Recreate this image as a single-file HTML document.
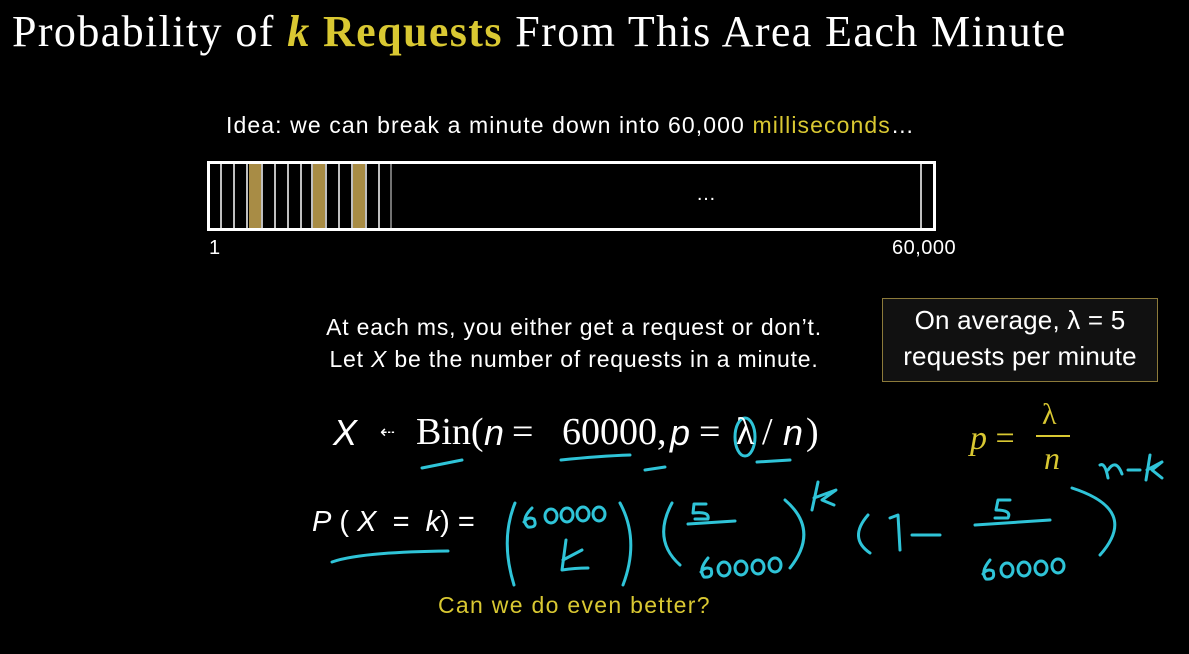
<!DOCTYPE html>
<html><head><meta charset="utf-8"><style>
body{margin:0;width:1189px;height:654px;background:#000;overflow:hidden;position:relative;font-family:"Liberation Sans","DejaVu Sans",sans-serif;color:#fff}
.a{position:absolute;white-space:nowrap}
.title{left:12px;top:6px;font-family:"Liberation Serif",serif;font-size:44px;letter-spacing:1.4px;color:#fff}
.y{color:#d9c832}
.m{position:absolute;font-family:"Liberation Serif",serif;font-size:38px;top:410px}
.mi{position:absolute;font-family:"Liberation Sans",sans-serif;font-style:italic;font-size:36px;top:412px}
</style></head><body>
<div class="a title">Probability of <b class="y"><i>k</i> Requests</b> From This Area Each Minute</div>
<div class="a" style="left:226px;top:112px;font-size:23px;letter-spacing:1.1px">Idea: we can break a minute down into 60,000 <span class="y">milliseconds</span>…</div>
<svg class="a" style="left:0;top:0" width="1189" height="654">
<rect x="208.5" y="162.5" width="726" height="67" fill="none" stroke="#fff" stroke-width="3"/>
<g fill="#a88c45"><rect x="249" y="164" width="12" height="64"/><rect x="313" y="164" width="12" height="64"/><rect x="353" y="164" width="12" height="64"/></g>
<g stroke="#fff" stroke-width="1.5">
<line x1="221" y1="164" x2="221" y2="228"/><line x1="234" y1="164" x2="234" y2="228"/><line x1="247" y1="164" x2="247" y2="228"/><line x1="262" y1="164" x2="262" y2="228"/><line x1="275" y1="164" x2="275" y2="228"/><line x1="288" y1="164" x2="288" y2="228"/><line x1="301" y1="164" x2="301" y2="228"/><line x1="312" y1="164" x2="312" y2="228"/><line x1="326" y1="164" x2="326" y2="228"/><line x1="339" y1="164" x2="339" y2="228"/><line x1="352" y1="164" x2="352" y2="228"/><line x1="366" y1="164" x2="366" y2="228"/><line x1="379" y1="164" x2="379" y2="228"/><line x1="391" y1="164" x2="391" y2="228" stroke="#999"/><line x1="921" y1="164" x2="921" y2="228"/>
</g>
<g fill="none" stroke="#2fc4d8" stroke-width="3" stroke-linecap="round" stroke-linejoin="round">
<path d="M422 468 L462 460"/><path d="M561 460 Q600 456 630 455"/><path d="M645 470 L665 467"/><path d="M757 462 L790 460"/>
<ellipse cx="745" cy="437" rx="10" ry="19"/>
<path d="M332 562 Q360 552 448 551"/>
<path d="M515 503 Q500 540 514 585"/><path d="M620 503 Q640 540 623 585"/>
<path d="M532 508 Q520 520 528 527 Q538 528 534 519 Q528 516 524 522"/>
<ellipse cx="551" cy="516" rx="6" ry="7"/><ellipse cx="567" cy="515" rx="6" ry="7"/><ellipse cx="583" cy="514" rx="6" ry="7"/><ellipse cx="599" cy="514" rx="6" ry="7"/>
<path d="M566 540 L562 570 Q575 568 588 568"/><path d="M563 560 L582 550"/>
<path d="M672 503 Q652 540 680 565"/><path d="M688 524 L735 521"/><path d="M706 504 L694 504 L693 513 Q710 511 708 519 L695 519"/>
<path d="M708 558 Q698 570 704 577 Q714 578 711 569 Q705 566 701 572"/>
<ellipse cx="724" cy="569" rx="6" ry="7"/><ellipse cx="741" cy="568" rx="6" ry="7"/><ellipse cx="758" cy="567" rx="6" ry="7"/><ellipse cx="775" cy="565" rx="6" ry="7"/>
<path d="M785 500 Q820 530 790 568"/>
<path d="M818 482 L812 510"/><path d="M814 498 L836 490 L822 500 L834 505"/>
<path d="M868 515 Q848 538 870 553"/><path d="M890 518 L898 515 L900 550"/><path d="M912 535 L940 535"/>
<path d="M975 525 L1050 520"/><path d="M1010 500 L998 500 L996 510 Q1012 510 1008 518 L995 518"/>
<path d="M990 560 Q980 572 986 579 Q996 580 993 571 Q987 568 983 574"/>
<ellipse cx="1007" cy="570" rx="6" ry="7"/><ellipse cx="1024" cy="569" rx="6" ry="7"/><ellipse cx="1041" cy="568" rx="6" ry="7"/><ellipse cx="1058" cy="566" rx="6" ry="7"/>
<path d="M1072 488 Q1140 510 1100 555"/>
<path d="M1100 465 Q1105 462 1108 478 M1108 470 Q1116 458 1122 474"/><path d="M1128 470 L1140 470"/><path d="M1150 455 L1146 480"/><path d="M1147 470 L1162 462 L1152 470 L1162 478"/>
</g>
</svg>
<div class="a" style="left:696px;top:183px;font-size:20px">…</div>
<div class="a" style="left:209px;top:237px;font-size:20px">1</div>
<div class="a" style="left:892px;top:237px;font-size:20px;letter-spacing:0.5px">60,000</div>
<div class="a" style="left:174px;width:800px;top:311px;font-size:23px;letter-spacing:0.8px;text-align:center;line-height:32px">At each ms, you either get a request or don’t.<br>Let <i>X</i> be the number of requests in a minute.</div>
<div class="a" style="left:882px;top:298px;width:276px;height:84px;border:1.5px solid #8c7a3a;background:#111;font-size:26px;letter-spacing:0.2px;text-align:center;line-height:36px;box-sizing:border-box;padding-top:3px">On average, λ = 5<br>requests per minute</div>
<div class="mi" style="left:333px">X</div>
<div class="a" style="left:380px;top:422px;font-size:18px">⇠</div>
<div class="m" style="left:416px">Bin(</div>
<div class="mi" style="left:484px">n</div>
<div class="m" style="left:512px">=</div>
<div class="m" style="left:562px">60000,</div>
<div class="mi" style="left:670px">p</div>
<div class="m" style="left:699px">=</div>
<div class="m" style="left:736px">λ</div>
<div class="m" style="left:762px">/</div>
<div class="mi" style="left:783px">n</div>
<div class="m" style="left:806px">)</div>
<div class="a" style="left:312px;top:506px;font-size:29px"><i>P</i> ( <i>X</i> &nbsp;= &nbsp;<i>k</i>) =</div>
<div class="a" style="left:970px;top:420px;font-size:34px;font-family:'Liberation Serif',serif;color:#d9c832"><i>p</i> =</div>
<div class="a" style="left:1042px;top:398px;font-size:30px;font-family:'Liberation Serif',serif;color:#d9c832">λ</div>
<div class="a" style="left:1036px;top:435px;width:34px;border-top:2px solid #d9c832"></div>
<div class="a" style="left:1044px;top:440px;font-size:32px;font-family:'Liberation Serif',serif;font-style:italic;color:#d9c832">n</div>
<div class="a" style="left:438px;top:592px;font-size:23px;letter-spacing:1.3px;color:#d9c832">Can we do even better?</div>
</body></html>
